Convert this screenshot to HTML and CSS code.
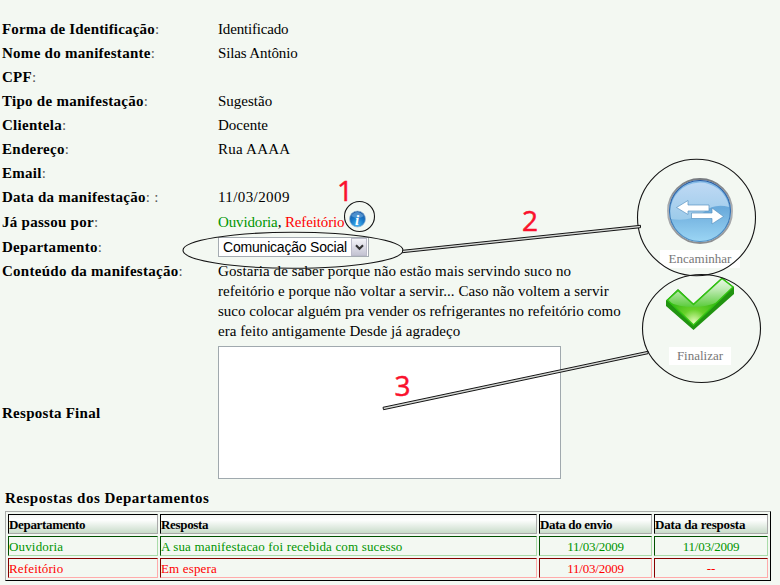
FILE: index.html
```html
<!DOCTYPE html>
<html lang="pt-BR">
<head>
<meta charset="utf-8">
<title>Manifestação</title>
<link rel="stylesheet" href="styles.css">
</head>
<body>
<main class="page">
  <section class="details">
    <div class="row tight"><b>Forma de Identificação<i>:</i></b><span>Identificado</span></div>
    <div class="row"><b>Nome do manifestante<i>:</i></b><span class="tighter">Silas Antônio</span></div>
    <div class="row"><b>CPF<i>:</i></b><span></span></div>
    <div class="row"><b>Tipo de manifestação<i>:</i></b><span>Sugestão</span></div>
    <div class="row"><b>Clientela<i>:</i></b><span>Docente</span></div>
    <div class="row"><b>Endereço<i>:</i></b><span class="wide">Rua AAAA</span></div>
    <div class="row"><b>Email<i>:</i></b><span></span></div>
    <div class="row"><b>Data da manifestação<i>: :</i></b><span class="wider">11/03/2009</span></div>
    <div class="row passed"><b>Já passou por<i>:</i></b><span class="tighter"><em class="green">Ouvidoria</em>, <em class="red">Refeitório</em></span></div>
    <div class="row dept"><b>Departamento<i>:</i></b>
      <div class="select"><span>Comunicação Social</span><span class="arrow"><svg width="9" height="7" viewBox="0 0 9 7"><path d="M1 1.2 4.5 4.7 8 1.2" fill="none" stroke="#333" stroke-width="2.1"/></svg></span></div>
    </div>
    <div class="row content"><b>Conteúdo da manifestação<i>:</i></b>
      <p><span class="loose">Gostaria de saber porque não estão mais servindo suco no</span><br><span class="looser">refeitório e porque não voltar a servir... Caso não voltem a servir</span><br>suco colocar alguém pra vender os refrigerantes no refeitório como<br><span class="looser">era feito antigamente Desde já agradeço</span></p>
    </div>
    <div class="row answer"><b>Resposta Final</b><div class="textarea"></div></div>
  </section>
  <section class="responses">
    <h2>Respostas dos Departamentos</h2>
    <div class="table">
      <div class="cell head">Departamento</div><div class="cell head">Resposta</div><div class="cell head">Data do envio</div><div class="cell head last">Data da resposta</div>
      <div class="cell ok">Ouvidoria</div><div class="cell ok">A sua manifestacao foi recebida com sucesso</div><div class="cell ok date">11/03/2009</div><div class="cell ok date">11/03/2009</div>
      <div class="cell wait">Refeitório</div><div class="cell wait">Em espera</div><div class="cell wait date">11/03/2009</div><div class="cell wait date">--</div>
    </div>
  </section>
  <div class="action forward">Encaminhar</div>
  <div class="action finish">Finalizar</div>
  <svg class="notes" width="780" height="585" viewBox="0 0 780 585">
    <defs>
      <linearGradient id="ring" x1="0" y1="0" x2="0" y2="1"><stop offset="0" stop-color="#777b80"/><stop offset=".5" stop-color="#b3b5b8"/><stop offset="1" stop-color="#8b8d90"/></linearGradient>
      <linearGradient id="blue" x1="0" y1="0" x2="0" y2="1"><stop offset="0" stop-color="#86bbe7"/><stop offset=".45" stop-color="#6aaadb"/><stop offset="1" stop-color="#9bd5f4"/></linearGradient>
      <linearGradient id="rim" x1="0" y1="0" x2="0" y2="1"><stop offset="0" stop-color="#2357a0"/><stop offset="1" stop-color="#4e90c4"/></linearGradient>
      <linearGradient id="gloss" x1="0" y1="0" x2="0" y2="1"><stop offset="0" stop-color="#bfd9f4"/><stop offset="1" stop-color="#9ccbea"/></linearGradient>
      <radialGradient id="info" cx=".5" cy=".85" r=".8"><stop offset="0" stop-color="#42b4ef"/><stop offset=".55" stop-color="#1877c7"/><stop offset="1" stop-color="#1557a4"/></radialGradient>
      <radialGradient id="check" gradientUnits="userSpaceOnUse" cx="694" cy="322" r="36"><stop offset="0" stop-color="#e0fbb5"/><stop offset=".35" stop-color="#68d12a"/><stop offset="1" stop-color="#20ae0c"/></radialGradient>
      <linearGradient id="shine" x1="0" y1="0" x2="0" y2="1"><stop offset="0" stop-color="#f5fcf2"/><stop offset=".4" stop-color="#c3ecb9"/><stop offset="1" stop-color="#5bcc3c"/></linearGradient>
      <clipPath id="tick"><path d="M667.5 300 678 290.500 693.5 304.5 722 278.500 733 287 693.5 325Z"/></clipPath>
    </defs>
    <circle cx="357.5" cy="219" r="8" fill="url(#info)" stroke="#9ab7d3" stroke-width=".7"/>
    <path d="M351 216Q357 208 364 216 358 220 351 216Z" fill="#7eb4e4" opacity=".55"/>
    <text x="355" y="224.5" class="info-letter">i</text>
    <circle cx="700" cy="211" r="32" fill="#f4f4f4" stroke="url(#ring)" stroke-width="2"/>
    <circle cx="700" cy="211" r="30.5" fill="url(#blue)" stroke="url(#rim)" stroke-width="1.2"/>
    <path d="M670.3 211A29.7 29.7 0 0 1 729.2 207Q714 203 704 212 690 222 671 219Z" fill="url(#gloss)"/>
    <path d="M676.5 207.500 688 200.500V205H709V211H688V214.500ZM691.5 213H712V208L723.5 216.500 712 224V218.500H691.5Z" fill="#fff" stroke="#5a94c2" stroke-width=".7"/>
    <path d="M666 300.500 678 289 693.5 303.500 722 277.500 734 287V294L693.5 330 666 306Z" fill="#219411"/>
    <path d="M667.5 300 678 290.500 693.5 304.500 722 278.500 733 287 693.5 325Z" fill="url(#check)"/>
    <path clip-path="url(#tick)" d="M664 276H735V285Q724 307 693 307 678 307 664 300Z" fill="url(#shine)"/>
    <path d="M667.5 300 678 290.500 693.5 304.500 722 278.500 733 287 693.5 325Z" fill="none" stroke="#32c411" stroke-width="1.4"/>
    <g class="line">
      <circle cx="359.5" cy="216.500" r="15"/>
      <ellipse cx="293" cy="250.300" rx="110" ry="18"/>
      <ellipse cx="696.5" cy="217.500" rx="59" ry="58.300"/>
      <ellipse cx="701.5" cy="328.500" rx="59" ry="54"/>
      <path class="link" d="M402.5 250.300 640.5 225.300V227.700L402.5 252.700ZM383 407.300 648 351.300V353.700L383.5 409.700Z"/>
    </g>
    <text class="num" x="337" y="201">1</text>
    <text class="num" x="522" y="231">2</text>
    <text class="num" x="394.500" y="396">3</text>
  </svg>
</main>
</body>
</html>
```
FILE: styles.css
```css
body { margin: 0; background: #f3f8f2; color: #000; font: 15px/24px "Liberation Serif", serif; }
.page { position: relative; box-sizing: border-box; width: 780px; height: 585px; padding-top: 17px; overflow: hidden; }
.row { display: grid; grid-template-columns: 216px 1fr; height: 24px; padding-left: 2px; white-space: nowrap; }
.row b { letter-spacing: .27px; }
.row i { color: #555; font-style: normal; font-weight: normal; }
.row em { font-style: normal; }
.tight, .row.tight b { letter-spacing: .17px; }
.row.tight > span { letter-spacing: -.17px; }
.tighter { letter-spacing: -.13px; }
.wide { letter-spacing: .25px; }
.wider { letter-spacing: .4px; }
.loose { letter-spacing: .11px; }
.looser { letter-spacing: .05px; }
.green { color: #009500; }
.red { color: #f00; }
.passed { height: 26px; line-height: 27px; }
.select { display: flex; box-sizing: border-box; width: 151px; height: 20px; margin-top: 2px; padding: 0 1px 0 4px; border: 1px solid #a5acb2; background: #fff; font: 14px/18px "Liberation Sans", sans-serif; letter-spacing: -.2px; justify-content: space-between; }
.arrow { display: flex; width: 16px; border: 1px solid #bcbccb; background: linear-gradient(#f4f4f8, #c4c4d3); align-items: center; justify-content: center; box-sizing: border-box; }
.content { height: 87px; }
.content p { margin: 2px 0 0; line-height: 20px; }
.answer { height: 133px; line-height: 134px; }
.textarea { box-sizing: border-box; width: 343px; height: 133px; border: 1px solid #a0a9ae; background: #fff; }
h2 { margin: 7px 0 0 5px; font-size: 15px; line-height: 24px; letter-spacing: .5px; }
.table { display: grid; grid-template-columns: 150px 377px 113px 114px; grid-auto-rows: 20px; gap: 2px; box-sizing: border-box; width: 766px; height: 70px; margin: 1px 0 0 5px; padding: 2px; border: 1px solid; border-color: #a9aca9 #000 #000 #a9aca9; }
.cell { box-sizing: border-box; border: 1px solid; font-size: 13px; line-height: 20px; letter-spacing: .16px; white-space: nowrap; }
.head { border-color: #000 #aaa #aaa #000; background: linear-gradient(#f5f7f5, #fff 25%, #c9dcca); font-weight: bold; letter-spacing: -.33px; }
.last { letter-spacing: -.16px; }
.ok { color: #009500; border-color: #005000 #a9dba9 #a9dba9 #005000; }
.wait { color: #f00; border-color: #850000 #ffabab #ffabab #850000; }
.date { text-align: center; letter-spacing: -.2px; }
.action { position: absolute; height: 18px; background: #fff; color: #777; font-size: 13px; line-height: 18px; text-align: center; }
.forward { left: 660px; top: 250px; width: 80px; }
.finish { left: 669px; top: 347px; width: 62px; }
.notes { position: absolute; left: 0; top: 0; }
.line { fill: none; stroke: #151515; stroke-width: 1.1; }
.link { fill: #d5d8d5; stroke-width: 1; }
.num { fill: #fa112d; stroke: #fa112d; stroke-width: .5; font: 28px "Open Sans", sans-serif; }
.info-letter { fill: #fff; font: italic bold 15px "Liberation Serif", serif; }
```
